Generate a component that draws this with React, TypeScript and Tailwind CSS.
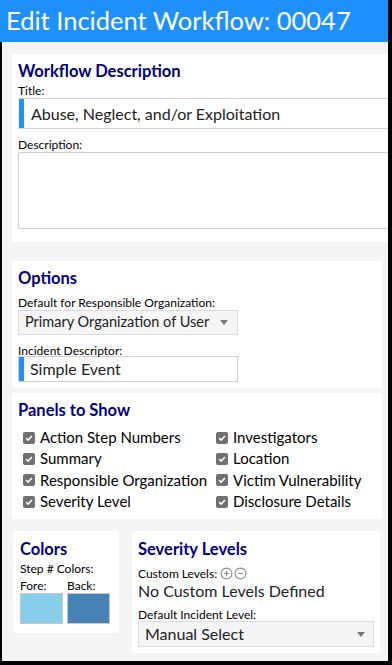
import { CirclePlus, CircleMinus } from 'lucide-react';

const PANELS_LEFT = ['Action Step Numbers', 'Summary', 'Responsible Organization', 'Severity Level'];
const PANELS_RIGHT = ['Investigators', 'Location', 'Victim Vulnerability', 'Disclosure Details'];

const font = { fontFamily: 'Lato, "Open Sans", "Liberation Sans", sans-serif' };

// small checked box
const Check = ({ label }: { label: string }) => (
  <div className="flex items-center h-[21.3px] gap-[5px]">
    <span className="w-[12px] h-[12px] rounded-[2px] bg-[#707070] flex items-center justify-center">
      <svg viewBox="0 0 12 12" className="w-[10px] h-[10px]">
        <path d="M2.5 6.2 L5 8.5 L9.5 3.5" fill="none" stroke="white" strokeWidth="1.8" />
      </svg>
    </span>
    <span className="text-[15px] text-black leading-none">{label}</span>
  </div>
);

const Caret = () => (
  <svg viewBox="0 0 8 5" className="w-[8px] h-[5px] shrink-0">
    <path d="M0 0 L8 0 L4 5 Z" fill="#777" />
  </svg>
);

const Heading = ({ children }: { children: React.ReactNode }) => (
  <h2 className="text-[16.5px] font-bold text-[#000080] leading-[20px]">{children}</h2>
);

const Label = ({ children }: { children: React.ReactNode }) => (
  <div className="text-[12px] text-black leading-[13px] whitespace-nowrap">{children}</div>
);

export default function App() {
  return (
    <div className="w-[392px] h-[665px] overflow-hidden border-r-4 border-b-4 border-black flex flex-col" style={font}>
      {/* Header */}
      <div className="h-[42px] shrink-0 bg-[#1e90ff] pl-[6px] flex items-center">
        <h1 className="text-[25.5px] text-white leading-none whitespace-nowrap">Edit Incident Workflow: 00047</h1>
      </div>

      <div className="flex-1 border-l-2 border-black bg-[#f4f4f4] pl-[10px] pt-[12px] overflow-hidden">
        {/* Workflow Description */}
        <div className="w-[400px] bg-white px-[6px] pt-[7px] pb-[13px]">
          <Heading>Workflow Description</Heading>
          <div className="mt-[3px]"><Label>Title:</Label></div>
          <div className="mt-[1px] h-[31px] flex border-y border-[#d0d0d0] items-stretch">
            <span className="w-[5px] bg-[#1e90ff] ml-[1px]" />
            <span className="pl-[7px] flex items-center text-[16px] leading-none text-[#222]">Abuse, Neglect, and/or Exploitation</span>
          </div>
          <div className="mt-[9px]"><Label>Description:</Label></div>
          <div className="mt-[1px] h-[77px] border border-[#cfcfcf] rounded-[2px]" />
        </div>

        {/* Options */}
        <div className="mt-[19px] w-[370px] bg-white px-[6px] pt-[7px] pb-[6px]">
          <Heading>Options</Heading>
          <div className="mt-[8px]"><Label>Default for Responsible Organization:</Label></div>
          <div className="mt-[1px] w-[220px] h-[25px] bg-[#f5f5f5] border border-[#dcdcdc] flex items-center justify-between pl-[6px] pr-[9px]">
            <span className="text-[14.5px] leading-none text-[#222] whitespace-nowrap">Primary Organization of User</span>
            <Caret />
          </div>
          <div className="mt-[9px]"><Label>Incident Descriptor:</Label></div>
          <div className="-mt-px w-[220px] h-[26px] border border-[#d0d0d0] flex items-stretch">
            <span className="w-[5px] bg-[#1e90ff]" />
            <span className="pl-[6px] flex items-center text-[16px] leading-none text-[#222]">Simple Event</span>
          </div>
        </div>

        {/* Panels to Show */}
        <div className="mt-[5px] w-[370px] bg-white px-[6px] pt-[7px] pb-[7px]">
          <Heading>Panels to Show</Heading>
          <div className="mt-[7px] pl-[5px] grid grid-cols-[193px_1fr]">
            <div className="flex flex-col">
              {PANELS_LEFT.map(p => <Check key={p} label={p} />)}
            </div>
            <div className="flex flex-col">
              {PANELS_RIGHT.map(p => <Check key={p} label={p} />)}
            </div>
          </div>
        </div>

        {/* Colors & Severity */}
        <div className="mt-[12px] flex items-start">
          <div className="ml-[1px] w-[106px] h-[102px] bg-white px-[7px] pt-[8px]">
            <Heading>Colors</Heading>
            <div className="mt-[3px]"><Label>Step # Colors:</Label></div>
            <div className="mt-[4px] flex gap-[4px]">
              <div className="flex flex-col">
                <Label>Fore:</Label>
                <div className="mt-[1px] w-[43px] h-[31px] bg-[#87ceeb] border border-[#c8c8c8]" />
              </div>
              <div className="flex flex-col">
                <Label>Back:</Label>
                <div className="mt-[1px] w-[43px] h-[31px] bg-[#4682b4] border border-[#c8c8c8]" />
              </div>
            </div>
          </div>

          <div className="ml-[13px] w-[248px] h-[122px] bg-white px-[6px] pt-[8px]">
            <Heading>Severity Levels</Heading>
            <div className="mt-[8px] flex items-center gap-[1px]">
              <Label>Custom Levels:</Label>
              <CirclePlus className="w-[13px] h-[13px] text-[#8a8a8a] ml-[2px]" strokeWidth={2} />
              <CircleMinus className="w-[13px] h-[13px] text-[#8a8a8a]" strokeWidth={2} />
            </div>
            <div className="mt-[1px] text-[16px] text-[#222] leading-[20px]">No Custom Levels Defined</div>
            <div className="mt-[7px]"><Label>Default Incident Level:</Label></div>
            <div className="mt-0 w-[236px] h-[26px] bg-[#f5f5f5] border border-[#dcdcdc] flex items-center justify-between pl-[6px] pr-[8px]">
              <span className="text-[16px] leading-none text-[#222]">Manual Select</span>
              <Caret />
            </div>
          </div>
        </div>
      </div>
    </div>
  );
}
